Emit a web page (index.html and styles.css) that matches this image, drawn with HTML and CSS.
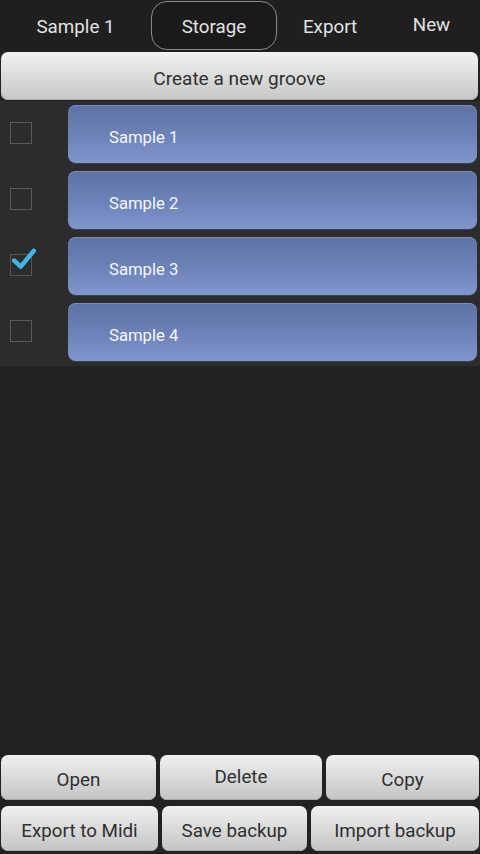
FILE: index.html
```html
<!DOCTYPE html>
<html>
<head>
<meta charset="utf-8">
<link rel="stylesheet" href="styles.css">
</head>
<body>
<div class="app">
  <div class="tabs">
    <div class="tab t1">Sample 1</div>
    <div class="tab t2"><span class="active">Storage</span></div>
    <div class="tab t3">Export</div>
    <div class="tab t4 up">New</div>
  </div>
  <div class="create">Create a new groove</div>
  <div class="list">
    <div class="row"><span class="cb"></span><div class="item">Sample 1</div></div>
    <div class="row"><span class="cb"></span><div class="item">Sample 2</div></div>
    <div class="row"><span class="cb checked"><svg class="tick" viewBox="0 0 24 24" width="26" height="26"><path d="M3 13.5 L9 19 L21 4.5" fill="none" stroke="#3fb6e6" stroke-width="4.2" stroke-linecap="round" stroke-linejoin="round"/></svg></span><div class="item">Sample 3</div></div>
    <div class="row"><span class="cb"></span><div class="item">Sample 4</div></div>
  </div>
  <div class="spacer"></div>
  <div class="actions">
    <div class="arow r1">
      <div class="btn b-open">Open</div>
      <div class="btn b-del up">Delete</div>
      <div class="btn b-copy">Copy</div>
    </div>
    <div class="arow r2">
      <div class="btn b-midi">Export to Midi</div>
      <div class="btn b-save">Save backup</div>
      <div class="btn b-imp">Import backup</div>
    </div>
  </div>
</div>
</body>
</html>
```
FILE: styles.css
```css
html, body {
  margin: 0;
  padding: 0;
  background: #222222;
}
body {
  font-family: Roboto, "Noto Sans", "Liberation Sans", sans-serif;
}
.app {
  width: 480px;
  height: 854px;
  display: flex;
  flex-direction: column;
  background: #222222;
}
.tabs {
  height: 52px;
  display: flex;
  background: #1f1f1f;
}
.tab {
  display: flex;
  align-items: center;
  justify-content: center;
  color: #e2e2e2;
  font-size: 18.8px;
  padding-top: 2px;
  box-sizing: border-box;
}
.t1 { width: 151px; }
.t2 { width: 126px; padding: 1px 0 2px; }
.t3 { width: 106px; }
.t4 { flex: 1; }
.tab.up { padding-top: 0; padding-bottom: 2px; }
.active {
  width: 100%;
  height: 100%;
  box-sizing: border-box;
  border: 1.5px solid #8a8a8a;
  border-radius: 16px;
  background: #1a1a1a;
  display: flex;
  align-items: center;
  justify-content: center;
  padding-top: 3px;
}
.create {
  height: 48px;
  margin: 0 2px 0 1px;
  border-radius: 7px;
  background: linear-gradient(#f2f2f2, #dcdcdc 50%, #c6c6c6);
  box-shadow: inset 0 -1px 0 #b0aba3;
  color: #303030;
  font-size: 19px;
  display: flex;
  align-items: center;
  justify-content: center;
  padding-top: 4px;
  box-sizing: border-box;
}
.list {
  margin-top: 1px;
  background: #2c2c2c;
  padding: 4px 0 5px;
  display: flex;
  flex-direction: column;
  gap: 8px;
}
.row {
  height: 58px;
  display: flex;
  align-items: center;
}
.cb {
  width: 22px;
  height: 22px;
  box-sizing: border-box;
  border: 1.5px solid #5a5a5a;
  margin: 0 36px 0 10px;
  position: relative;
  flex: none;
  transform: translateY(-1px);
}
.cb.checked { border-color: #555; }
.tick {
  position: absolute;
  left: 0px;
  top: -9px;
}
.item {
  flex: 1;
  height: 58px;
  box-sizing: border-box;
  margin-right: 3px;
  border-radius: 8px;
  background: linear-gradient(#5e71a5, #6e83b9 55%, #8096cc);
  box-shadow: inset 0 1px 0 #7a8dc0, 0 1px 0 #3a4256;
  color: #f4f6fb;
  font-size: 16.7px;
  display: flex;
  align-items: center;
  padding-left: 41px;
  padding-top: 6px;
}
.spacer { flex: 1; }
.actions {
  display: flex;
  flex-direction: column;
  gap: 6px;
  padding: 0 1px 3px;
}
.arow {
  display: flex;
  height: 45px;
}
.btn {
  height: 45px;
  box-sizing: border-box;
  border-radius: 7px;
  background: linear-gradient(#f0f0f0, #dadada 50%, #c4c4c4);
  box-shadow: inset 0 -1px 0 #a9a9a9;
  color: #303030;
  font-size: 18.8px;
  display: flex;
  align-items: center;
  justify-content: center;
  padding-top: 4px;
}
.btn.up { padding-top: 0; padding-bottom: 1px; }
.r1 { gap: 4px; }
.b-open { width: 155px; }
.b-del { width: 162px; }
.b-copy { flex: 1; }
.r2 { gap: 4px; }
.b-midi { width: 157px; }
.b-save { width: 145px; }
.b-imp { flex: 1; }
```
